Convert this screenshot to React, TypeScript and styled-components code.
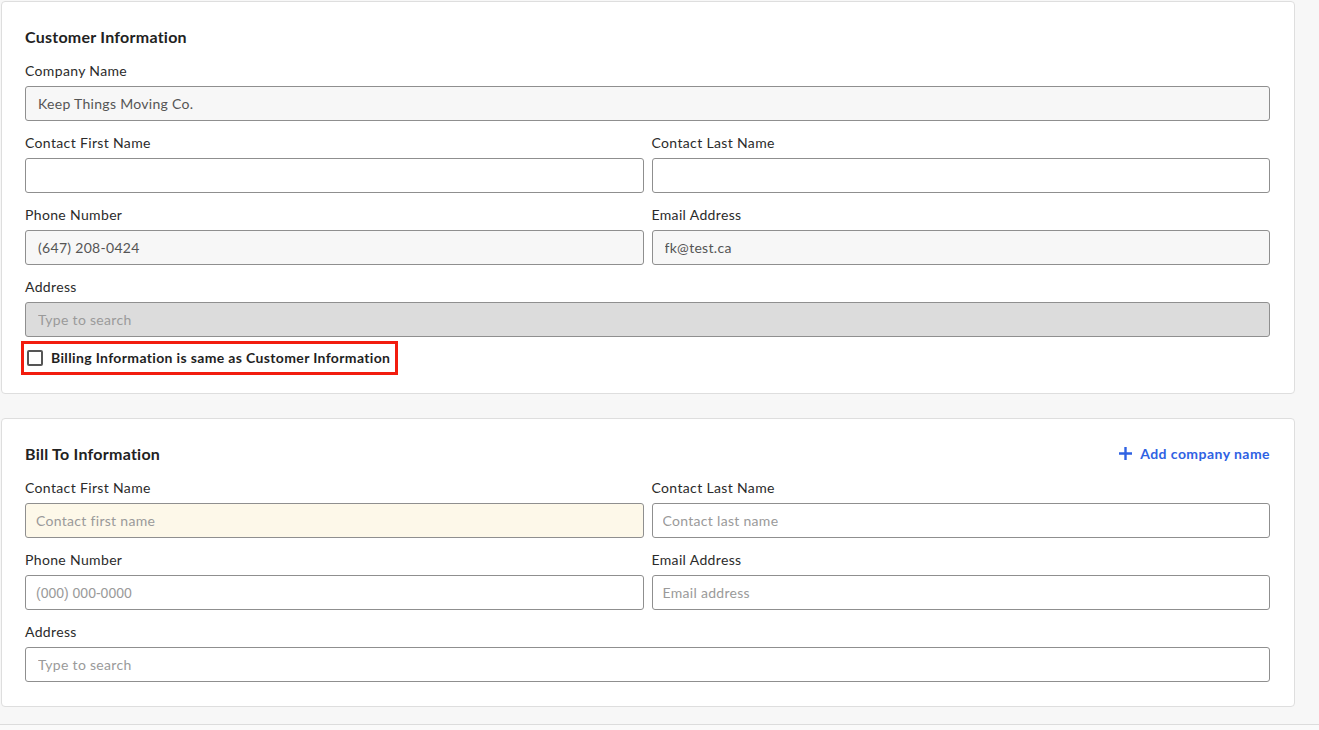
import React from "react";
import styled, { createGlobalStyle } from "styled-components";

const GlobalStyle = createGlobalStyle`
  html, body {
    margin: 0;
    padding: 0;
    background: #f7f7f7;
  }

  body {
    font-family: Lato, "Noto Sans", sans-serif;
    color: #222;
  }

  * {
    box-sizing: border-box;
  }
`;

const Page = styled.div`
  display: flex;
  flex-direction: column;
  gap: 24px;
  padding: 1px 24px 0 1px;
  height: 730px;
  overflow: hidden;
`;

const Card = styled.section`
  background: #fff;
  border: 1px solid #dedede;
  border-radius: 4px;
  padding: 23px 24px 24px 23px;
  display: flex;
  flex-direction: column;
  flex-shrink: 0;
`;

const Footer = styled.div`
  margin: -7px -24px 0 -1px;
  flex-shrink: 0;
  height: 20px;
  border-top: 1px solid #dcdcdc;
  background: #fafafa;
`;

const CardHeader = styled.div`
  display: flex;
  align-items: center;
  justify-content: space-between;
  height: 22px;
  margin-bottom: 14px;
`;

const Title = styled.h2`
  margin: 0;
  font-size: 16px;
  font-weight: 700;
  color: #222;
  letter-spacing: 0.25px;
`;

const AddLink = styled.button`
  display: flex;
  align-items: center;
  gap: 8px;
  border: none;
  background: none;
  padding: 0;
  font-family: inherit;
  font-size: 14px;
  font-weight: 700;
  letter-spacing: 0.45px;
  color: #2f62e3;
  cursor: pointer;
`;

const Rows = styled.div`
  display: flex;
  flex-direction: column;
  gap: 12px;
`;

const Row = styled.div`
  display: grid;
  grid-template-columns: 1fr 1fr;
  column-gap: 8px;
`;

const Field = styled.label`
  display: flex;
  flex-direction: column;
  gap: 5px;
`;

const Label = styled.span`
  font-size: 14px;
  line-height: 20px;
  letter-spacing: 0.35px;
  color: #2b2b2b;
`;

type Tone = "plain" | "readonly" | "disabled" | "highlight";

const toneBg: Record<Tone, string> = {
  plain: "#fff",
  readonly: "#f7f7f7",
  disabled: "#dcdcdc",
  highlight: "#fdf8e9",
};

const Input = styled.input<{ $tone?: Tone; $pad?: number; $mono?: boolean }>`
  height: 35px;
  width: 100%;
  border: 1px solid #8f8f8f;
  border-radius: 3px;
  padding: 0 ${(p) => p.$pad ?? 12}px;
  background: ${(p) => toneBg[p.$tone ?? "plain"]};
  font-family: ${(p) => (p.$mono ? '"Liberation Sans", Arial, sans-serif' : 'Lato, "Noto Sans", sans-serif')};
  font-size: 14px;
  letter-spacing: ${(p) => (p.$mono ? "0" : "0.3px")};
  color: #555;
  outline: none;

  &::placeholder {
    color: #9a9a9a;
  }
`;

const CheckRow = styled.div`
  margin: 4px 0 -6px -4px;
  align-self: flex-start;
  border: 3px solid #f21c0e;
  padding: 6px 5px 6px 3px;
  display: flex;
  align-items: center;
  gap: 8px;
`;

const Box = styled.span`
  width: 16px;
  height: 16px;
  border: 2px solid #555;
  border-radius: 2px;
  background: #fff;
`;

const CheckText = styled.span`
  font-size: 14px;
  line-height: 16px;
  font-weight: 700;
  letter-spacing: 0.35px;
  color: #1f1f1f;
`;

const PlusIcon = () => (
  <svg width="13" height="13" viewBox="0 0 13 13">
    <path d="M6.5 1v11M1 6.5h11" stroke="#2f62e3" strokeWidth="2.4" strokeLinecap="square" />
  </svg>
);

const FormField = ({ label, children }: { label: string; children: React.ReactNode }) => (
  <Field>
    <Label>{label}</Label>
    {children}
  </Field>
);

export default function App() {
  return (
    <>
      <GlobalStyle />
      <Page>
        <Card>
          <CardHeader>
            <Title>Customer Information</Title>
          </CardHeader>
          <Rows>
            <FormField label="Company Name">
              <Input $tone="readonly" readOnly defaultValue="Keep Things Moving Co." />
            </FormField>
            <Row>
              <FormField label="Contact First Name">
                <Input />
              </FormField>
              <FormField label="Contact Last Name">
                <Input />
              </FormField>
            </Row>
            <Row>
              <FormField label="Phone Number">
                <Input $tone="readonly" readOnly defaultValue="(647) 208-0424" />
              </FormField>
              <FormField label="Email Address">
                <Input $tone="readonly" readOnly defaultValue="fk@test.ca" />
              </FormField>
            </Row>
            <FormField label="Address">
              <Input $tone="disabled" disabled placeholder="Type to search" />
            </FormField>
          </Rows>
          <CheckRow>
            <Box />
            <CheckText>Billing Information is same as Customer Information</CheckText>
          </CheckRow>
        </Card>

        <Card>
          <CardHeader>
            <Title>Bill To Information</Title>
            <AddLink>
              <PlusIcon />
              Add company name
            </AddLink>
          </CardHeader>
          <Rows>
            <Row>
              <FormField label="Contact First Name">
                <Input $tone="highlight" $pad={10} placeholder="Contact first name" />
              </FormField>
              <FormField label="Contact Last Name">
                <Input $pad={10} placeholder="Contact last name" />
              </FormField>
            </Row>
            <Row>
              <FormField label="Phone Number">
                <Input $pad={10} $mono placeholder="(000) 000-0000" />
              </FormField>
              <FormField label="Email Address">
                <Input $pad={10} placeholder="Email address" />
              </FormField>
            </Row>
            <FormField label="Address">
              <Input placeholder="Type to search" />
            </FormField>
          </Rows>
        </Card>

        <Footer />
      </Page>
    </>
  );
}
